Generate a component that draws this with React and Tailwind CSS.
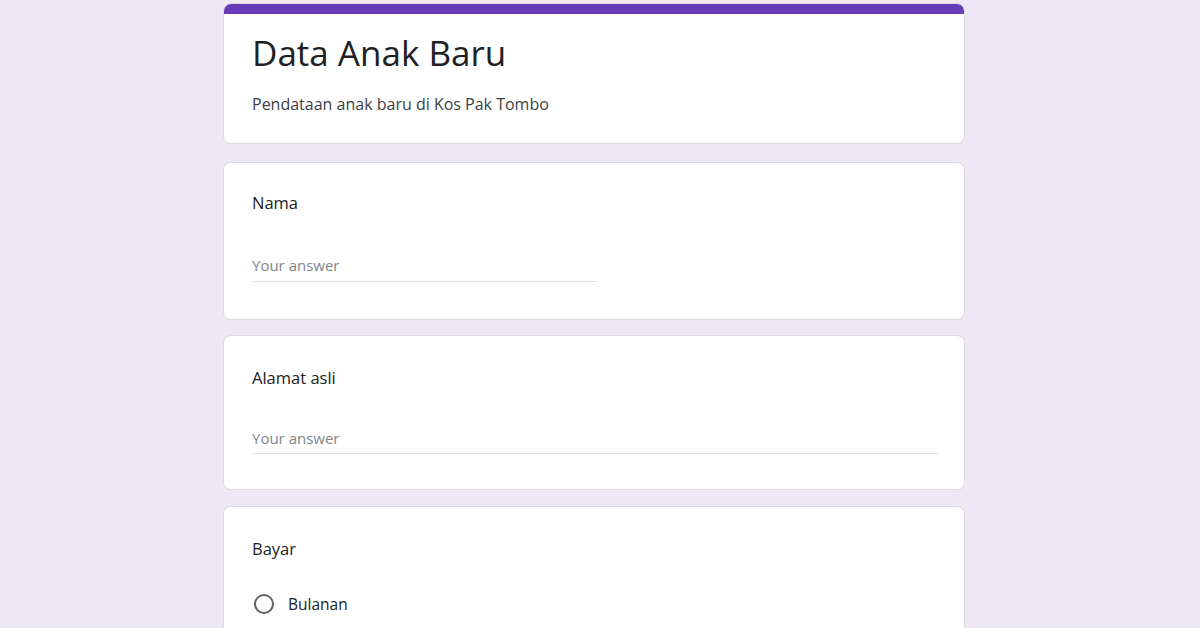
import React from 'react';

function TextQuestion({ label, inputWidth, pad }) {
  return (
    <div className={`bg-white rounded-lg border border-[#dadce0] pl-7 pr-[25px] ${pad.card}`}>
      <div className="text-[16.5px] leading-6 text-[#202124]">{label}</div>
      <div className={`border-b border-[#e0e0e0] text-[15px] leading-5 text-[#80868b] ${pad.input} ${inputWidth}`}>
        Your answer
      </div>
    </div>
  );
}

export default function App() {
  return (
    <div className="min-h-[628px] bg-[#ede7f6] pt-[3px] font-['Open_Sans','Liberation_Sans',sans-serif]">
      <div className="ml-[223px] w-[742px] flex flex-col">
        {/* Header */}
        <div className="bg-white rounded-lg border border-[#dadce0] overflow-hidden">
          <div className="h-[10px] bg-[#673ab7]" />
          <div className="pl-7 pr-6 pt-[19px] pb-[29px]">
            <h1 className="text-[35px] leading-10 text-[#202124]">Data Anak Baru</h1>
            <p className="mt-[21px] text-[16px] leading-5 text-[#3c4043]">Pendataan anak baru di Kos Pak Tombo</p>
          </div>
        </div>

        <div className="mt-[18px]">
          <TextQuestion
            label="Nama"
            inputWidth="w-[345px]"
            pad={{ card: 'pt-[28px] pb-[37px]', input: 'mt-[40px] pb-[6px]' }}
          />
        </div>

        <div className="mt-[15px]">
          <TextQuestion
            label="Alamat asli"
            inputWidth="w-full"
            pad={{ card: 'pt-[30px] pb-[35px]', input: 'mt-[38px] pb-[5px]' }}
          />
        </div>

        <div className="mt-4 bg-white rounded-lg border border-[#dadce0] pt-[30px] pl-7 pr-[25px] pb-10">
          <div className="text-[16.5px] leading-6 text-[#202124]">Bayar</div>
          <label className="mt-[33px] flex items-center gap-[14px]">
            <span className="w-5 h-5 rounded-full border-2 border-[#5f6368] ml-[2px]" />
            <span className="text-[15.5px] leading-5 text-[#202124]">Bulanan</span>
          </label>
        </div>
      </div>
    </div>
  );
}
